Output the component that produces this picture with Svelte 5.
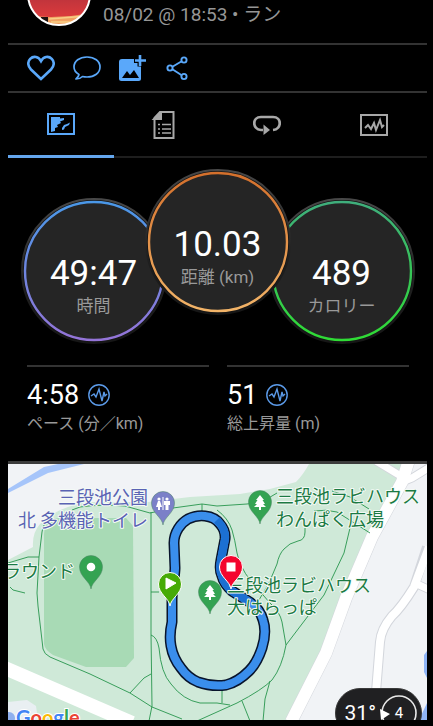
<script>
    const tabs = ["地図", "詳細", "ラップ", "グラフ"];
    let active = $state(0);
    let liked = $state(false);

    const rings = [
        { id: "time", value: "49:47", label: "時間", from: "#4a98e8", to: "#9474d8" },
        { id: "distance", value: "10.03", label: "距離 (km)", from: "#d4702c", to: "#f2b468" },
        { id: "calories", value: "489", label: "カロリー", from: "#3fae7c", to: "#2fdc35" }
    ];

    const stats = [
        { value: "4:58", label: "ペース (分／km)" },
        { value: "51", label: "総上昇量 (m)" }
    ];

    const paths = [
        "M8 563L28 557H39",
        "M10 587L13 590L25 593",
        "M72 510L80 507Q100 504 125 506L150 513L173 508L202 504L217 506L247 504Q262 503 277 493",
        "M52 517Q43 522 42 532L39 557L37 593L38 606L43 649Q44 654 50 657L90 674L130 693L152 707L182 719",
        "M151 512V634L152 706L149 721",
        "M151 592H159",
        "M151 635Q157 637 159 648Q161 673 171 684Q183 700 200 703H217L230 705",
        "M130 693L144 678L151 674",
        "M202 504V514",
        "M217 510Q228 518 232 530Q235 540 237 553Q240 567 250 580L270 603Q280 612 282 622L286 645",
        "M305 522V532Q305 540 298 541Q289 543 284 549Q279 554 277 564L269 583L259 600",
        "M350 528L344 553L324 595L286 645Q282 667 272 680Q262 690 237 703L217 712L197 721",
        "M332 491L350 497L369 509M314 511Q326 509 337 512L370 533",
        "M270 681L265 699L263 721M242 701L250 721M222 690V703"
    ];

    const track = "M172 600C172 588 175 575 175 568L174 543C174 532 181 523 188 519Q196 515 205 516Q215 517 220 524Q226 531 225 539L221 560Q219 570 222 576Q224 584 232 591L251 603Q260 609 263 620Q267 632 262 648Q257 663 249 671Q238 682 226 685Q212 687 198 682Q188 678 181 668Q173 658 171 646Q169 635 172 622Z";

    const pins = [
        { x: 163, y: 503, color: "#7b80c8", kind: "toilet" },
        { x: 260, y: 502, color: "#34a352", kind: "tree" },
        { x: 91, y: 567, color: "#34a352", kind: "dot" },
        { x: 210, y: 592, color: "#34a352", kind: "tree" }
    ];
</script>

{#snippet pinShape()}
    <path d="M0 22C-1 14-11.500 10-11.500 0A11.500 11.500 0 0 1 11.500 0C11.500 10 1 14 0 22Z" />
{/snippet}

<main>
    <header>
        <svg class="avatar" viewBox="0 0 64 64" aria-hidden="true">
            <defs>
                <linearGradient id="photo" x1="0" y1="0" x2="0" y2="1">
                    <stop offset="0.5" stop-color="#b8323c" />
                    <stop offset="0.82" stop-color="#d83a3c" />
                </linearGradient>
                <clipPath id="face"><circle cx="32" cy="32" r="31" /></clipPath>
            </defs>
            <g clip-path="url(#face)">
                <rect width="64" height="64" fill="url(#photo)" />
                <path d="M0 54L24 55L44 54L64 51V64H0Z" fill="#f0a262" />
                <path d="M22 57L60 54M24 60H52" stroke="#f7cf86" stroke-width="1.500" />
                <rect x="14" y="55" width="7" height="5" fill="#1e1210" />
            </g>
            <circle cx="32" cy="32" r="31" fill="none" stroke="#fff" stroke-width="2" />
        </svg>
        <p>08/02 @ 18:53 • ラン</p>
    </header>

    <div class="actions">
        <button aria-label="いいね" onclick={() => { liked = !liked }}>
            <svg viewBox="0 0 28 28">
                <path d="M14 25L4 15.500C.5 12 .5 7.500 3.200 4.800C6.500 1.500 11.500 2.500 14 7C16.500 2.500 21.500 1.500 24.800 4.800C27.500 7.500 27.500 12 24 15.500Z" fill={liked ? "#5aa8fa" : "none"} stroke="#5aa8fa" stroke-width="2.600" />
            </svg>
        </button>
        <button aria-label="コメント">
            <svg viewBox="0 0 28 28" fill="none" stroke="#5aa8fa" stroke-width="1.700" stroke-linejoin="round">
                <path d="M6 20.500C2.500 18.500 1 16 1 13C1 7 6.500 3 14 3S27 7 27 13S21.500 23 14 23Q11.500 23 9.500 22.500Q7 25 3 25Q5.500 23 6 20.500Z" />
            </svg>
        </button>
        <button aria-label="写真を追加">
            <svg viewBox="0 0 28 28" fill="#5aa8fa">
                <path d="M3 5H22V24.500Q22 27 19.500 27H2.500Q0 27 0 24.500V8Q0 5 3 5Z" />
                <path d="M3 24L8 17L11 21L15 16L20 24Z" fill="#000" />
                <path d="M21 0V12.500M15 6.500H27" stroke="#000" stroke-width="5" />
                <path d="M21 1V12M16 6.500H27" stroke="#5aa8fa" stroke-width="2.600" />
            </svg>
        </button>
        <button aria-label="共有">
            <svg viewBox="0 0 28 28" fill="none" stroke="#5aa8fa" stroke-width="1.900">
                <circle cx="5" cy="14" r="2.600" />
                <circle cx="19" cy="6" r="2.600" />
                <circle cx="19" cy="22.500" r="2.600" />
                <path d="M7.400 12.700L16.700 7.300M7.400 15.300L16.700 21.200" />
            </svg>
        </button>
    </div>

    <nav>
        {#each tabs as tab, i}
            <button class:active={active === i} aria-label={tab} onclick={() => { active = i }}>
                <svg viewBox="0 0 28 28" fill="none" stroke="currentColor" stroke-width="2">
                    {#if i === 0}
                        <rect x="1" y="4" width="26" height="20" />
                        <path d="M4 7H13V8.500L17 8V10L13 11.500L14 13L10 15L11 17L8 18L8 21L4 22Z" fill="currentColor" stroke="none" />
                        <path d="M15 20V18L17 15L20 14L23 12.500L22 15L18 17L17 19.500Z" fill="currentColor" stroke="none" />
                    {:else if i === 1}
                        <path d="M10 1H23.500V27H4.500V7Z" />
                        <path d="M4 8L11 1V8Z" fill="currentColor" />
                        <path d="M12 13.500H21M12 18H21M12 22H21M8 13.500H10M8 18H10M8 22H10" stroke-width="1.700" />
                    {:else if i === 2}
                        <path d="M10 19H8C-1 18-1 6 8 6H20C29 6 29 18 20 19" stroke-width="2.700" />
                        <path d="M10.500 13.500V24L17 19Z" fill="currentColor" stroke="none" />
                    {:else}
                        <rect x="1" y="4" width="26" height="20" />
                        <path d="M5 17L8 14L11 18L14 12L16 19L20 9L22 16L24 14" />
                    {/if}
                </svg>
            </button>
        {/each}
    </nav>

    <section class="rings">
        {#each rings as ring}
            <div class="ring">
                <svg viewBox="0 0 146 146" aria-hidden="true">
                    <defs>
                        <linearGradient id={ring.id} x1="0" y1="0" x2="0" y2="1">
                            <stop offset="0" stop-color={ring.from} />
                            <stop offset="1" stop-color={ring.to} />
                        </linearGradient>
                        <linearGradient id="{ring.id}-rim" x1="0" y1="0" x2="0" y2="1">
                            <stop offset="0" stop-color="#484848" />
                            <stop offset="0.6" stop-color="#202020" />
                            <stop offset="1" stop-color="#161616" />
                        </linearGradient>
                    </defs>
                    <circle cx="73" cy="73" r="72" fill="#141414" stroke="url(#{ring.id}-rim)" stroke-width="2" />
                    <circle cx="73" cy="73" r="69" fill="#252525" stroke="url(#{ring.id})" stroke-width="2.400" />
                </svg>
                <strong>{ring.value}</strong>
                <span>{ring.label}</span>
            </div>
        {/each}
    </section>

    <section class="stats">
        {#each stats as stat}
            <div class="stat">
                <div class="value">
                    {stat.value}
                    <svg viewBox="0 0 22 22" fill="none" stroke="#5b9ae8" stroke-width="1.400">
                        <circle cx="11" cy="11" r="10.200" />
                        <path d="M3 12L6 10L8 13L11 5L14 17L16 8L17 12L19 10" />
                    </svg>
                </div>
                <div class="label">{stat.label}</div>
            </div>
        {/each}
    </section>

    <section class="map">
        <svg class="tiles" viewBox="8 464 419 256" preserveAspectRatio="xMidYMid slice">
            <rect x="8" y="464" width="419" height="256" fill="#cfe9d8" />
            <path d="M8 464H309Q303 475 296 482L270 489L240 494L190 497L148 502L90 502Q58 506 40 524Q32 533 33 547L8 560Z" fill="#f1f3f6" />
            <path d="M410 464H427V720H290L326 653L346 598L372 537L402 480Z" fill="#f1f3f6" />
            <path d="M8 702L27 700L36 706L38 720H8Z" fill="#e9eff2" />
            <path d="M8 489L44 467L58 464H84L48 473L8 493Z" fill="#a6c5fa" />
            <path d="M44 534Q45 518 60 518H126L133 526L134 658L126 667H86L53 655Q45 650 44 644Z" fill="#a8dab5" />
            <path d="M427 651L424 655V672L427 678M427 703L419 720H427Z" fill="#8fb5f7" />
            <g fill="none" stroke="#d3d6dc">
                <path d="M427 547L414 587Q401 608 392 616Q381 629 380 642L376 692" stroke-width="10" />
                <path d="M417 584L430 590M402 482L412 478L430 467M376 461L404 478" stroke-width="9" />
                <path d="M409 460L402 482L372 537L346 598L326 653L291 722" stroke-width="13" />
            </g>
            <g fill="none" stroke="#fff">
                <path d="M429 547L414 587Q401 608 392 616Q381 629 380 642L376 692" stroke-width="8" />
                <path d="M417 584L430 590M402 482L412 478L430 467M376 461L404 478" stroke-width="7" />
                <path d="M409 460L402 482L372 537L346 598L326 653L291 722" stroke-width="12" />
                <path d="M0 666L132 723" stroke-width="14" />
            </g>
            <g fill="none" stroke="#27954d" stroke-width="0.900">
                {#each paths as d}
                    <path {d} />
                {/each}
            </g>
            <g fill="none" stroke-linejoin="round">
                <path d={track} stroke="#08142c" stroke-width="11" />
                <path d={track} stroke="#3a8eec" stroke-width="8" />
                <path d="M217 520Q226 529 225 539L221 560Q219 570 222 576Q224 584 232 591L251 603" stroke="#1c70d2" stroke-width="8" />
            </g>

            <g class="place">
                <text class="violet" x="148" y="504" text-anchor="end">三段池公園</text>
                <text class="violet" x="148" y="527" text-anchor="end">北 多機能トイレ</text>
                <text x="276" y="503">三段池ラビハウス</text>
                <text x="276" y="526">わんぱく広場</text>
                <text x="75" y="578" text-anchor="end">グラウンド</text>
                <text x="227" y="592">三段池ラビハウス</text>
                <text x="227" y="614">大はらっぱ</text>
            </g>

            {#each pins as pin}
                <g transform="translate({pin.x} {pin.y})" fill={pin.color} stroke="#4f8567" stroke-width="0.500">
                    {@render pinShape()}
                    <g fill="#fff" stroke="none">
                        {#if pin.kind === "tree"}
                            <path d="M0-7L4-2H2.500L5 2H3L6 5H1V8H-1V5H-6L-3 2H-5L-2.500-2H-4Z" />
                        {:else if pin.kind === "dot"}
                            <circle r="4.300" />
                        {:else}
                            <circle cx="-4" cy="-4" r="1.600" />
                            <circle cx="4" cy="-4" r="1.600" />
                            <path d="M-5-2H-3L-1 4H-3V7H-5V4H-7ZM1-2H7V2H5.500V7H2.500V2H1ZM-.5-6H.5V7H-.5Z" />
                        {/if}
                    </g>
                </g>
            {/each}
            <g transform="translate(170 584)" fill="#46ab06" stroke="#fff">
                {@render pinShape()}
                <path d="M-4-6L6-1L-4 5Z" fill="#fff" />
            </g>
            <g transform="translate(231 567)" fill="#f4052e" stroke="#fff">
                {@render pinShape()}
                <rect x="-4" y="-4" width="8" height="8" fill="#fff" />
            </g>

            <circle cx="9" cy="718" r="6" fill="#8fb0ee" />
            <text class="google" x="16" y="725"><tspan fill="#4285f4">G</tspan><tspan fill="#ea4335">o</tspan><tspan fill="#fbbc05">o</tspan><tspan fill="#4285f4">g</tspan><tspan fill="#34a853">l</tspan><tspan fill="#ea4335">e</tspan></text>
        </svg>

        <div class="weather">
            <span>31°</span>
            <div class="wind">
                <svg viewBox="0 0 38 38" aria-hidden="true">
                    <circle cx="19" cy="19" r="17" fill="none" stroke="#e8e8e8" stroke-width="1.600" />
                    <path d="M0 15L10 20L1 26Z" fill="#fff" />
                </svg>
                4
            </div>
        </div>
    </section>
</main>

<style>
    :global(body) {
        margin: 0;
        background: #000;
    }

    main {
        padding: 0 6px 6px 8px;
        background: #000;
        color: #fff;
        font-family: Roboto, "Noto Sans CJK JP", sans-serif;
    }

    button {
        display: flex;
        align-items: center;
        justify-content: center;
        border: none;
        background: none;
        margin: 0;
        padding: 0;
    }

    svg {
        display: block;
    }

    header {
        display: flex;
        align-items: flex-start;
        gap: 12px;
        height: 43px;
        padding-left: 19px;
        overflow: hidden;

        p {
            margin: 0;
            color: #969696;
            font-size: 19px;
            line-height: 30px;
        }
    }

    .avatar {
        width: 64px;
        height: 64px;
        margin-top: -38px;
    }

    .actions {
        display: flex;
        gap: 18px;
        padding: 9px 19px;
        border-top: 2px solid #333;
        border-bottom: 2px solid #333;

        svg {
            width: 28px;
            height: 28px;
        }
    }

    nav {
        display: grid;
        grid-template-columns: 106fr 100fr 106fr 107fr;

        button {
            height: 65px;
            box-sizing: border-box;
            border-bottom: 2px solid #1e1e1e;
            color: #a8a8a8;
        }

        button.active {
            border-bottom: 3px solid #64a6ee;
            color: #5aa8fa;
        }

        svg {
            width: 28px;
            height: 28px;
        }
    }

    .rings {
        display: flex;
        justify-content: center;
        padding-top: 11px;
    }

    .ring {
        position: relative;
        display: flex;
        flex-direction: column;
        align-items: center;
        width: 146px;
        height: 146px;
        box-sizing: border-box;
        margin: 29px -11px 0;
        padding-top: 56px;

        &:nth-child(2) {
            z-index: 1;
            margin-top: 0;
        }

        svg {
            position: absolute;
            inset: 0;
        }

        strong {
            position: relative;
            font-size: 35px;
            font-weight: 400;
            line-height: 40px;
        }

        span {
            position: relative;
            color: #999;
            font-size: 17px;
            line-height: 24px;
        }
    }

    .stats {
        display: grid;
        grid-template-columns: 1fr 1fr;
        gap: 18px;
        padding: 21px 18px 25px 19px;
    }

    .stat {
        border-top: 2px solid #333;
        padding-top: 11px;
    }

    .value {
        display: flex;
        align-items: center;
        gap: 9px;
        font-size: 27px;
        line-height: 34px;

        svg {
            width: 22px;
            height: 22px;
        }
    }

    .label {
        color: #999;
        font-size: 16px;
        line-height: 24px;
    }

    .map {
        position: relative;
        overflow: hidden;
        border-top: 3px solid #3c3c3c;
    }

    .tiles {
        width: 100%;
    }

    .place {
        fill: #1b7a43;
        stroke: #f4faf6;
        stroke-width: 2px;
        stroke-linejoin: round;
        paint-order: stroke;
        font-family: "Noto Sans CJK JP", sans-serif;
        font-size: 18px;
    }

    .violet {
        fill: #5a63b4;
    }

    .google {
        font-family: Lato, sans-serif;
        font-size: 20px;
        font-weight: 700;
        stroke: #fff;
        stroke-width: 2px;
        paint-order: stroke;
    }

    .weather {
        position: absolute;
        right: 5px;
        bottom: -18px;
        display: flex;
        align-items: center;
        gap: 4px;
        height: 50px;
        box-sizing: border-box;
        padding: 0 3px 0 9px;
        border: 1px solid #3a3a3a;
        border-radius: 25px;
        background: #202022;
        font-size: 21px;
    }

    .wind {
        position: relative;
        width: 38px;
        font-size: 15px;
        line-height: 38px;
        text-align: center;

        svg {
            position: absolute;
            inset: 0;
        }
    }
</style>
